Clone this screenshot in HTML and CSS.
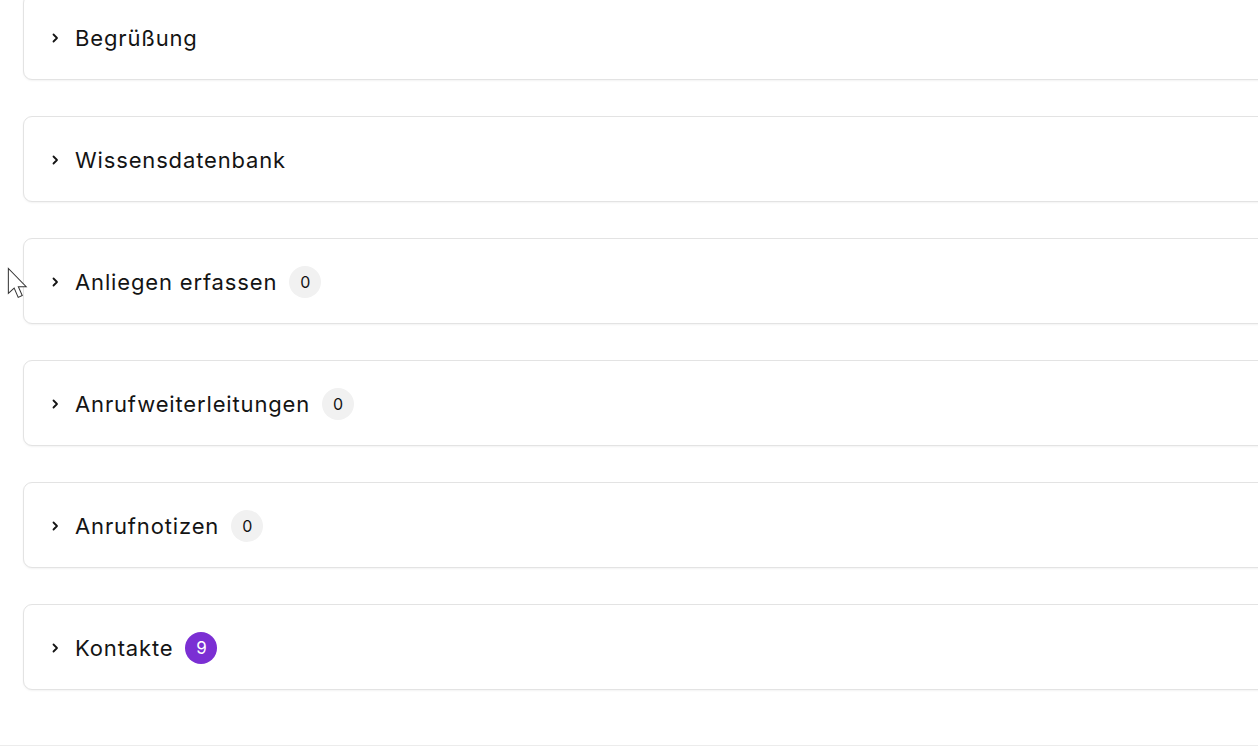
FILE: index.html
```html
<!DOCTYPE html>
<html lang="de">
<head>
<meta charset="utf-8">
<link rel="stylesheet" href="styles.css">
</head>
<body>
<div class="page">
  <div class="list">
    <div class="card">
      <svg class="chev" viewBox="0 0 8 10" width="8" height="10"><path d="M2.5 1.5 L6 5 L2.5 8.5" fill="none" stroke="#141414" stroke-width="1.8" stroke-linecap="round" stroke-linejoin="round"/></svg>
      <span class="title">Begrüßung</span>
    </div>
    <div class="card">
      <svg class="chev" viewBox="0 0 8 10" width="8" height="10"><path d="M2.5 1.5 L6 5 L2.5 8.5" fill="none" stroke="#141414" stroke-width="1.8" stroke-linecap="round" stroke-linejoin="round"/></svg>
      <span class="title">Wissensdatenbank</span>
    </div>
    <div class="card">
      <svg class="chev" viewBox="0 0 8 10" width="8" height="10"><path d="M2.5 1.5 L6 5 L2.5 8.5" fill="none" stroke="#141414" stroke-width="1.8" stroke-linecap="round" stroke-linejoin="round"/></svg>
      <span class="title">Anliegen erfassen</span>
      <span class="badge">0</span>
    </div>
    <div class="card">
      <svg class="chev" viewBox="0 0 8 10" width="8" height="10"><path d="M2.5 1.5 L6 5 L2.5 8.5" fill="none" stroke="#141414" stroke-width="1.8" stroke-linecap="round" stroke-linejoin="round"/></svg>
      <span class="title">Anrufweiterleitungen</span>
      <span class="badge">0</span>
    </div>
    <div class="card">
      <svg class="chev" viewBox="0 0 8 10" width="8" height="10"><path d="M2.5 1.5 L6 5 L2.5 8.5" fill="none" stroke="#141414" stroke-width="1.8" stroke-linecap="round" stroke-linejoin="round"/></svg>
      <span class="title">Anrufnotizen</span>
      <span class="badge">0</span>
    </div>
    <div class="card">
      <svg class="chev" viewBox="0 0 8 10" width="8" height="10"><path d="M2.5 1.5 L6 5 L2.5 8.5" fill="none" stroke="#141414" stroke-width="1.8" stroke-linecap="round" stroke-linejoin="round"/></svg>
      <span class="title">Kontakte</span>
      <span class="badge badge-purple">9</span>
    </div>
  </div>
  <div class="footer-line"></div>
  <svg class="cursor" viewBox="0 0 20 28" width="27" height="38"><path d="M1 1 L1 19.5 L5.3 15.6 L8.3 22.4 L11.3 21.1 L8.4 14.5 L14.2 14.5 Z" fill="#ffffff" stroke="#333" stroke-width="0.75" stroke-linejoin="miter"/></svg>
</div>
</body>
</html>
```
FILE: styles.css
```css
html, body {
  margin: 0;
  padding: 0;
  background: #ffffff;
  overflow: hidden;
}
body {
  font-family: "Inter", "Noto Sans", sans-serif;
  color: #141414;
}
.page {
  position: relative;
  width: 1258px;
  height: 746px;
  overflow: hidden;
}
.list {
  display: flex;
  flex-direction: column;
  gap: 36px;
  margin-top: -6px;
  margin-left: 23px;
  width: 1260px;
}
.card {
  box-sizing: border-box;
  height: 86px;
  border: 1px solid #e3e3e3;
  border-radius: 9px;
  background: #fff;
  box-shadow: 0 1px 2px rgba(0,0,0,0.05);
  display: flex;
  align-items: center;
  padding-left: 27px;
  padding-top: 2px;
}
.chev {
  flex: none;
  margin-right: 16px;
}
.title {
  font-size: 22px;
  letter-spacing: 0.85px;
  font-weight: 400;
  line-height: 1;
}
.badge {
  margin-left: 12px;
  width: 32px;
  height: 32px;
  border-radius: 50%;
  background: #f1f1f1;
  color: #141414;
  font-size: 16px;
  display: flex;
  align-items: center;
  justify-content: center;
}
.badge-purple {
  background: #7b2fd3;
  color: #fff;
  font-size: 17px;
}
.footer-line {
  position: absolute;
  left: 0;
  right: 0;
  top: 745px;
  height: 1px;
  background: #ececec;
}
.cursor {
  position: absolute;
  left: 7px;
  top: 267px;
}
```
